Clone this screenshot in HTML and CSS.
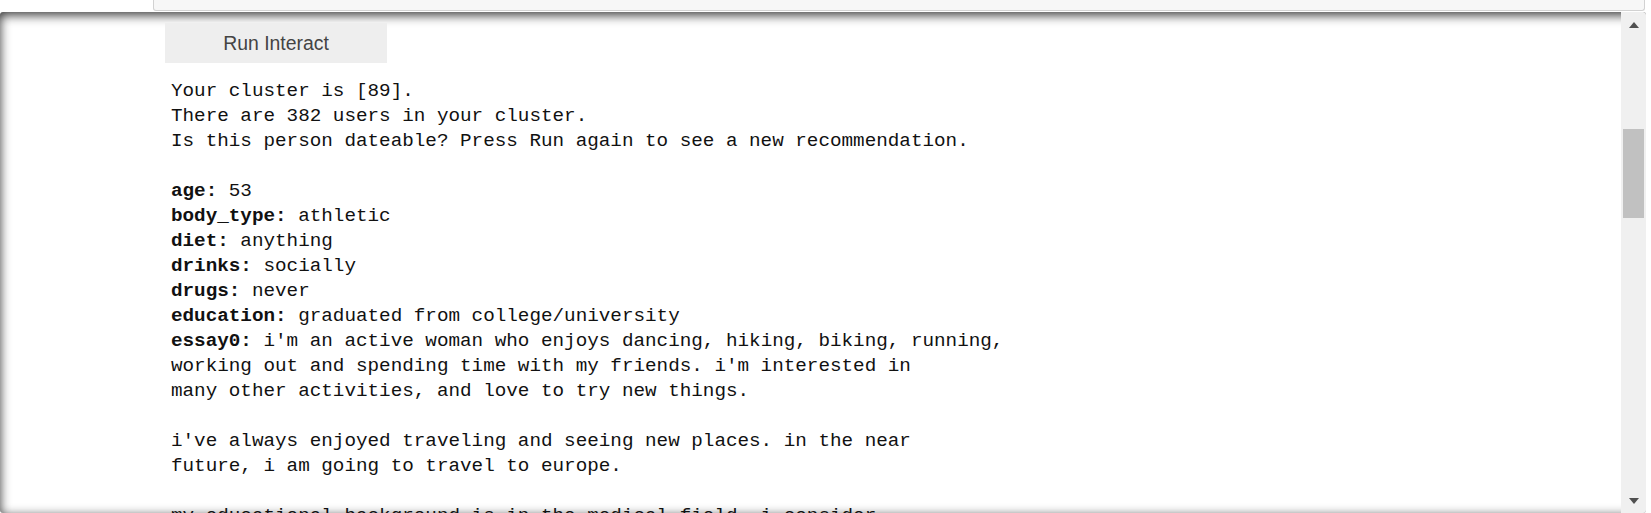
FILE: index.html
```html
<!DOCTYPE html>
<html>
<head>
<meta charset="utf-8">
<link rel="stylesheet" href="styles.css">
</head>
<body>
<div class="prev-cell"><div class="prev-box"></div></div>
<div class="output">
  <div class="output-content">
    <button class="run-btn">Run Interact</button>
<pre class="text">Your cluster is [89].
There are 382 users in your cluster.
Is this person dateable? Press Run again to see a new recommendation.

<b>age:</b> 53
<b>body_type:</b> athletic
<b>diet:</b> anything
<b>drinks:</b> socially
<b>drugs:</b> never
<b>education:</b> graduated from college/university
<b>essay0:</b> i'm an active woman who enjoys dancing, hiking, biking, running,
working out and spending time with my friends. i'm interested in
many other activities, and love to try new things.

i've always enjoyed traveling and seeing new places. in the near
future, i am going to travel to europe.

my educational background is in the medical field. i consider
</pre>
  </div>
  <div class="scrollbar">
    <div class="sb-btn"><div class="tri up"></div></div>
    <div class="sb-track"><div class="sb-thumb"></div></div>
    <div class="sb-btn"><div class="tri down"></div></div>
  </div>
</div>
</body>
</html>
```

FILE: styles.css
```css
html, body {
  margin: 0;
  padding: 0;
  background: #ffffff;
}

.prev-cell {
  height: 12px;
}

.prev-box {
  box-sizing: border-box;
  margin-left: 153px;
  width: 1492px;
  height: 11px;
  background: #f7f7f7;
  border: 1px solid #d2d2d2;
  border-top: 0;
  border-radius: 0 0 3px 3px;
}

.output {
  width: 1646px;
  height: 501px;
  display: flex;
  overflow: hidden;
  border-radius: 3px;
  box-shadow: inset 0 3px 11px rgba(0, 0, 0, 0.8);
}

.output-content {
  flex: 1;
  min-width: 0;
  overflow: hidden;
  padding: 11px 0 0 165px;
}

.run-btn {
  display: block;
  margin: 0;
  width: 222px;
  height: 40px;
  padding: 0;
  border: 0;
  background: #eeeeee;
  color: #444444;
  font-family: "Liberation Sans", Arial, sans-serif;
  font-size: 19.4px;
}

.text {
  margin: 16px 0 0 6px;
  font-family: "Liberation Mono", "DejaVu Sans Mono", monospace;
  font-size: 19.27px;
  line-height: 25px;
  color: #111111;
  white-space: pre;
}

.text b {
  font-weight: bold;
}

.scrollbar {
  width: 25px;
  flex: none;
  background: #f0f0f0;
  display: flex;
  flex-direction: column;
}

.sb-btn {
  height: 25px;
  display: flex;
  align-items: center;
  justify-content: center;
}

.sb-track {
  flex: 1;
  padding: 0 2px;
}

.sb-thumb {
  margin-top: 92px;
  height: 89px;
  background: #c1c1c1;
}

.tri {
  width: 0;
  height: 0;
  border-left: 5.5px solid transparent;
  border-right: 5.5px solid transparent;
}

.tri.up {
  border-bottom: 6px solid #505050;
}

.tri.down {
  border-top: 6px solid #505050;
}
```
